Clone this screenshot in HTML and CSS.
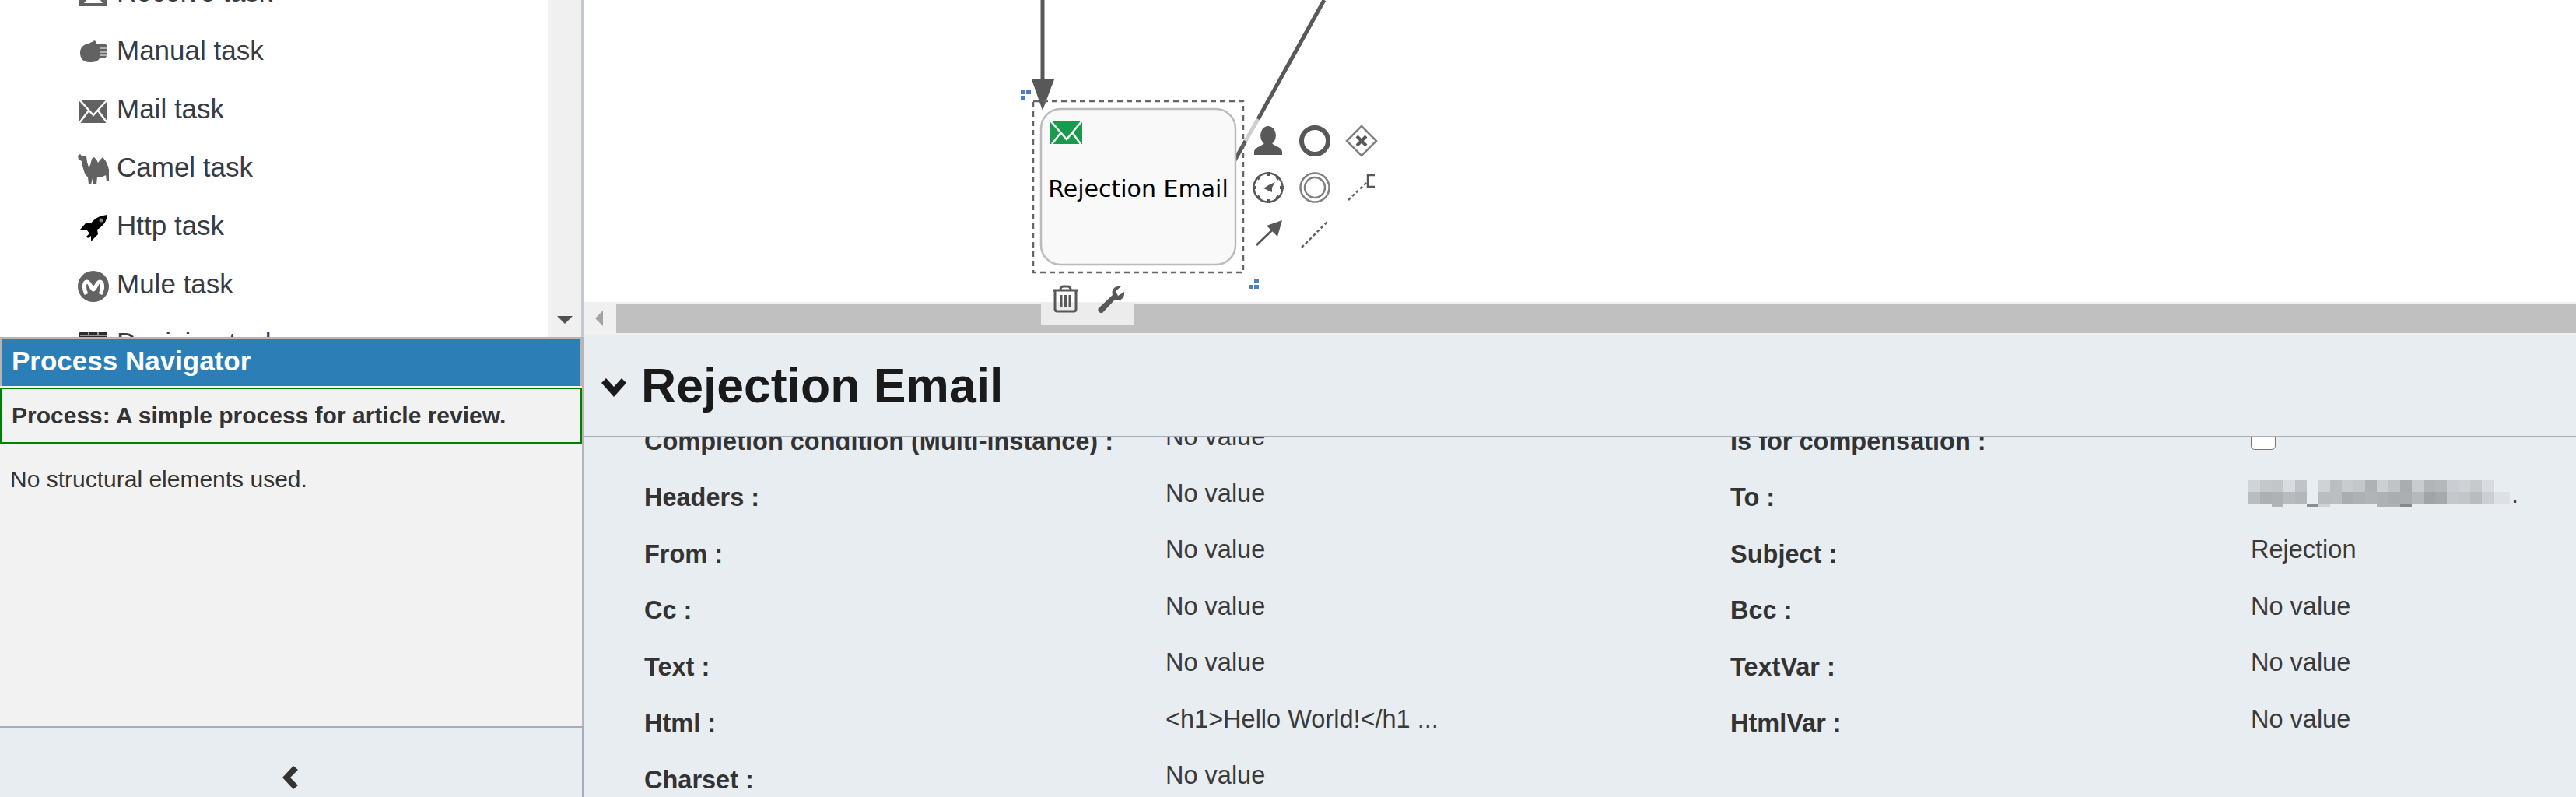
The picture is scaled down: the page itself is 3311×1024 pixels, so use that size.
FILE: index.html
```html
<!DOCTYPE html>
<html lang="en">

<head>
    <meta charset="UTF-8">
    <meta name="viewport" content="width=device-width, initial-scale=1.0">
    <title>Rejection Email</title>
    <link rel="stylesheet" href="styles.css">
</head>

<body>
    <div class="app">
        <aside class="sidebar">
            <div class="palette">
                <ul class="palette-list">
                    <li class="palette-item">
                        <svg class="palette-icon" viewBox="0 0 40 46">
                            <rect class="ic-grey" x="2" y="11" width="36" height="30" />
                            <polygon class="ic-white" points="8,37 14,29 26,29 32,37" />
                        </svg>
                        Receive task
                    </li>
                    <li class="palette-item">
                        <svg class="palette-icon" viewBox="0 0 40 46">
                            <path class="ic-grey" d="M3 26C3 18 8 15 14 14L22 10L25 15H36Q38 16 38 24Q38 32 34 33H28C26 37 22 38 15 38C7 38 3 33 3 26Z" />
                            <path class="ic-cut ic-cut-thin" d="M29 20H38M29 25H38M29 29H38" />
                        </svg>
                        Manual task
                    </li>
                    <li class="palette-item">
                        <svg class="palette-icon" viewBox="0 0 40 46">
                            <rect class="ic-grey" x="2" y="11" width="36" height="30" />
                            <path class="ic-cut" d="M2 11L20 31L38 11M2 41L14 25M38 41L26 25" />
                        </svg>
                        Mail task
                    </li>
                    <li class="palette-item">
                        <svg class="palette-icon" viewBox="0 0 40 46">
                            <path class="ic-grey" d="M0 8L3 6L6 9L11 9L12 16L14 23L16 20L18 12L21 10L24 13L26 17L29 13L32 10L36 15L39 22L40 26V41H37L36 33L32 35L25 35L24 45H20L19 37L17 45H14L13 36L9 31L6 21L5 15L1 13Z" />
                        </svg>
                        Camel task
                    </li>
                    <li class="palette-item">
                        <svg class="palette-icon" viewBox="0 0 40 46">
                            <path d="M38 9C29 10 22 13 17 20H10L3 28L12 29L15 33L11 37L13 39L17 36L17 43L26 34L25 28C32 24 37 18 38 9Z" />
                            <circle class="ic-window" cx="30" cy="16" r="2.5" />
                        </svg>
                        Http task
                    </li>
                    <li class="palette-item">
                        <svg class="palette-icon" viewBox="0 0 40 46">
                            <circle class="ic-grey" cx="20" cy="26" r="20" />
                            <path class="ic-cut ic-cut-wide" d="M11 36C7 28 8 20 12 20C15 20 18 30 20 30C22 30 25 20 28 20C32 20 33 28 29 36" />
                        </svg>
                        Mule task
                    </li>
                    <li class="palette-item">
                        <svg class="palette-icon" viewBox="0 0 40 46">
                            <rect class="ic-dark" x="2" y="9" width="36" height="30" rx="2" />
                            <path class="ic-cut ic-cut-thin" d="M3 14H37M14 10V14M26 10V14" />
                        </svg>
                        Decision task
                    </li>
                </ul>
                <div class="palette-scroll">
                    <span class="arrow-down"></span>
                </div>
            </div>

            <section class="navigator">
                <h2 class="navigator-title">Process Navigator</h2>
                <div class="navigator-process">Process: A simple process for article review.</div>
                <p class="navigator-note">No structural elements used.</p>
            </section>

            <div class="sidebar-foot">
                <svg class="collapse-icon" viewBox="0 0 22 30">
                    <path d="M15 0L21 5L11 15L21 25L15 30L1 15Z" />
                </svg>
            </div>
        </aside>

        <main class="main">
            <div class="canvas">
                <!-- coordinates in the viewBox are the page ones, x starts at 750 -->
                <svg class="diagram" viewBox="750 0 1100 430">
                    <path class="edge" d="M1340 0V106" />
                    <polygon class="edge-head" points="1326,102 1355,102 1340,142" />
                    <path class="edge" d="M1587 206L1601 181" />
                    <path class="edge edge-faded" d="M1601 181L1617 153" />
                    <path class="edge" d="M1617 153L1702 0" />

                    <rect class="task" x="1338" y="140" width="250" height="200" rx="25" />
                    <rect class="task-select" x="1328" y="130" width="270" height="220" />
                    <text class="task-label" x="1463" y="253">Rejection Email</text>

                    <rect class="mail-back" x="1350" y="155" width="41" height="30" />
                    <path class="mail-lines" d="M1350 155L1371 179L1391 155M1352 185L1364 170M1389 185L1378 170" />

                    <g class="handle">
                        <rect x="1312" y="116" width="6" height="5" />
                        <rect x="1319" y="116" width="6" height="5" />
                        <rect x="1312" y="123" width="5" height="5" />
                        <rect x="1612" y="358" width="6" height="6" />
                        <rect x="1605" y="366" width="5" height="5" />
                        <rect x="1612" y="366" width="6" height="5" />
                    </g>

                    <rect class="pad-back" x="1338" y="389" width="120" height="29" />

                    <!-- context pad -->
                    <g class="pad">
                        <ellipse class="pad-fill" cx="1630" cy="174" rx="10" ry="12" />
                        <path class="pad-fill" d="M1612 199V195C1612 189 1622 188 1625 184H1635C1638 188 1648 189 1648 195V199Z" />
                        <circle class="pad-thick" cx="1690" cy="181" r="17" />
                        <polygon class="pad-light" points="1750,162 1769,181 1750,200 1731,181" />
                        <path class="pad-x" d="M1744 175L1756 187M1756 175L1744 187" />

                        <circle class="pad-thin" cx="1630" cy="241" r="18.500" />
                        <path class="pad-x" d="M1630 221V226M1630 256V261M1610 241H1615M1645 241H1650M1616 227L1619 230M1644 227L1641 230M1616 255L1619 252M1644 255L1641 252" />
                        <path class="pad-fill" d="M1624 242L1632 237L1639 234L1635 241L1635 247Z" />
                        <circle class="pad-light" cx="1690" cy="241" r="18.500" />
                        <circle class="pad-light" cx="1690" cy="241" r="13" />
                        <path class="pad-dash" d="M1733 257L1758 233" />
                        <path class="pad-thin" d="M1767 225H1758V240H1767" />

                        <path class="pad-line" d="M1615 315L1638 293" />
                        <polygon class="pad-fill" points="1648,283 1642,304 1628,290" />
                        <path class="pad-dash" d="M1673 318L1707 284" />

                        <!-- buttons under the task -->
                        <path class="pad-thin pad-trash" d="M1353 373H1386M1363 372Q1363 368 1367 368H1372Q1376 368 1376 372M1356 374V397Q1356 400 1359 400H1380Q1383 400 1383 397V374M1364 379V395M1369.500 379V395M1375 379V395" />
                        <path class="pad-fill" d="M1412 396L1430 379C1428 372 1433 367 1441 368L1434 374L1437 380L1445 375C1446 383 1440 388 1433 385L1417 402C1413 403 1410 399 1412 396Z" />
                    </g>
                </svg>
            </div>

            <div class="hscroll">
                <div class="hscroll-btn"><span class="arrow-left"></span></div>
                <div class="hscroll-thumb"></div>
            </div>

            <header class="head">
                <svg class="head-icon" viewBox="0 0 32 24">
                    <path d="M6 0L16 11L26 0L32 6L16 24L0 6Z" />
                </svg>
                <h1 class="head-title">Rejection Email</h1>
            </header>

            <div class="props">
                <div class="props-grid">
                    <div class="prop-label">Completion condition (Multi-instance) :</div>
                    <div class="prop-value">No value</div>
                    <div class="prop-label">Is for compensation :</div>
                    <div class="prop-value"><input class="prop-check" type="checkbox"></div>

                    <div class="prop-label">Headers :</div>
                    <div class="prop-value">No value</div>
                    <div class="prop-label">To :</div>
                    <div class="prop-value prop-blur">
                        <svg class="mosaic" viewBox="0 0 338 34" shape-rendering="crispEdges">
                            <rect x="0" y="0" width="15" height="15" fill="#d0d4d7" />
                            <rect x="15" y="0" width="15" height="15" fill="#c4c8cb" />
                            <rect x="30" y="0" width="15" height="15" fill="#c2c6c8" />
                            <rect x="45" y="0" width="15" height="15" fill="#d8dbe0" />
                            <rect x="60" y="0" width="15" height="15" fill="#c0c4c8" />
                            <rect x="90" y="0" width="15" height="15" fill="#cfd2d6" />
                            <rect x="105" y="0" width="15" height="15" fill="#babec1" />
                            <rect x="120" y="0" width="15" height="15" fill="#c8cbcf" />
                            <rect x="135" y="0" width="15" height="15" fill="#c4c7ca" />
                            <rect x="150" y="0" width="15" height="15" fill="#afb2b5" />
                            <rect x="165" y="0" width="15" height="15" fill="#ccd0d5" />
                            <rect x="180" y="0" width="15" height="15" fill="#c0c4c7" />
                            <rect x="195" y="0" width="15" height="15" fill="#a9adb0" />
                            <rect x="210" y="0" width="15" height="15" fill="#c8ccce" />
                            <rect x="225" y="0" width="15" height="15" fill="#b1b5b8" />
                            <rect x="240" y="0" width="15" height="15" fill="#b4b8bb" />
                            <rect x="255" y="0" width="15" height="15" fill="#cacdd2" />
                            <rect x="270" y="0" width="15" height="15" fill="#ced1d5" />
                            <rect x="285" y="0" width="15" height="15" fill="#c6cacd" />
                            <rect x="300" y="0" width="15" height="15" fill="#d8dce0" />

                            <rect x="0" y="15" width="15" height="15" fill="#b9bdc0" />
                            <rect x="15" y="15" width="15" height="15" fill="#adb0b3" />
                            <rect x="30" y="15" width="15" height="15" fill="#aeb2b5" />
                            <rect x="45" y="15" width="15" height="15" fill="#b8bcbf" />
                            <rect x="60" y="15" width="15" height="15" fill="#b3b7ba" />
                            <rect x="90" y="15" width="15" height="15" fill="#b9bdc0" />
                            <rect x="105" y="15" width="15" height="15" fill="#babec1" />
                            <rect x="120" y="15" width="15" height="15" fill="#a9adb0" />
                            <rect x="135" y="15" width="15" height="15" fill="#adb1b4" />
                            <rect x="150" y="15" width="15" height="15" fill="#b0b4b7" />
                            <rect x="165" y="15" width="15" height="15" fill="#aeb2b5" />
                            <rect x="180" y="15" width="15" height="15" fill="#a9adb0" />
                            <rect x="195" y="15" width="15" height="15" fill="#abafb2" />
                            <rect x="210" y="15" width="15" height="15" fill="#b5b9bc" />
                            <rect x="225" y="15" width="15" height="15" fill="#a0a4a7" />
                            <rect x="240" y="15" width="15" height="15" fill="#a5a9ac" />
                            <rect x="255" y="15" width="15" height="15" fill="#c4c8ca" />
                            <rect x="270" y="15" width="15" height="15" fill="#c2c6c9" />
                            <rect x="285" y="15" width="15" height="15" fill="#b8bcbf" />
                            <rect x="300" y="15" width="15" height="15" fill="#cbcfd3" />
                            <rect x="315" y="15" width="21" height="15" fill="#dde1e5" />

                            <rect x="30" y="30" width="15" height="4" fill="#b0b4b7" />
                            <rect x="75" y="30" width="15" height="4" fill="#8a8e91" />
                            <rect x="90" y="30" width="15" height="4" fill="#ced2d6" />
                            <rect x="165" y="30" width="30" height="4" fill="#aeb2b5" />
                            <rect x="195" y="30" width="15" height="4" fill="#85898c" />
                        </svg>.
                    </div>

                    <div class="prop-label">From :</div>
                    <div class="prop-value">No value</div>
                    <div class="prop-label">Subject :</div>
                    <div class="prop-value">Rejection</div>

                    <div class="prop-label">Cc :</div>
                    <div class="prop-value">No value</div>
                    <div class="prop-label">Bcc :</div>
                    <div class="prop-value">No value</div>

                    <div class="prop-label">Text :</div>
                    <div class="prop-value">No value</div>
                    <div class="prop-label">TextVar :</div>
                    <div class="prop-value">No value</div>

                    <div class="prop-label">Html :</div>
                    <div class="prop-value">&lt;h1&gt;Hello World!&lt;/h1 ...</div>
                    <div class="prop-label">HtmlVar :</div>
                    <div class="prop-value">No value</div>

                    <div class="prop-label">Charset :</div>
                    <div class="prop-value">No value</div>
                </div>
            </div>
        </main>
    </div>
</body>

</html>
```

FILE: styles.css
```css
* {
    box-sizing: border-box;
}

html,
body {
    margin: 0;
    height: 100%;
    overflow: hidden;
}

body {
    font-family: "Liberation Sans", Arial, sans-serif;
    font-size: 32.5px;
    color: #333;
    background: #e8edf1;
}

.app {
    display: flex;
    height: 1024px;
}

/* left column */
.sidebar {
    display: flex;
    flex-direction: column;
    flex: 0 0 750px;
    height: 100%;
}

.palette {
    display: flex;
    flex: 0 0 433px;
    overflow: hidden;
    border-right: 3px solid #c5cad0;
}

.palette-list {
    flex: 1;
    list-style: none;
    margin: -48px 0 0;
    padding: 0 0 0 100px;
    background: #fff;
}

.palette-item {
    display: flex;
    align-items: center;
    gap: 10px;
    height: 75px;
    font-size: 35px;
    color: #373c44;
}

.palette-icon {
    flex: 0 0 40px;
    width: 40px;
    height: 46px;
    filter: blur(0.6px);
}

.ic-grey {
    fill: #626262;
}

.ic-dark {
    fill: #2c2c2c;
}

.ic-white {
    fill: #fff;
}

.ic-window {
    fill: #888;
}

.ic-cut {
    fill: none;
    stroke: #fff;
    stroke-width: 2.5;
}

.ic-cut-wide {
    stroke-width: 5;
}

.ic-cut-thin {
    stroke-width: 1;
}

.palette-scroll {
    display: flex;
    justify-content: center;
    align-items: flex-end;
    flex: 0 0 42px;
    padding-bottom: 17px;
    background: #f0f0f0;
}

.arrow-down {
    border-left: 10px solid transparent;
    border-right: 10px solid transparent;
    border-top: 10px solid #505050;
}

.navigator {
    flex: 1;
    background: #f2f2f2;
    border-top: 2px solid #b5b5b5;
    border-right: 2px solid #b5b5b5;
}

.navigator-title {
    margin: 0;
    height: 61px;
    padding-left: 13px;
    font-size: 35px;
    line-height: 58px;
    font-weight: bold;
    color: #fff;
    background: #2b7eb6;
    border-left: 2px solid #b5b5b5;
    border-right: 2px solid #b5b5b5;
}

.navigator-process {
    height: 72px;
    margin-top: 2px;
    padding-left: 13px;
    font-size: 30px;
    line-height: 67px;
    font-weight: bold;
    border: 2px solid #008000;
}

.navigator-note {
    margin: 27px 0 0 13px;
    font-size: 30px;
    line-height: 37px;
}

.sidebar-foot {
    display: flex;
    justify-content: center;
    align-items: flex-end;
    flex: 0 0 91px;
    padding: 0 2px 10px 0;
    background: #e8edf1;
    border-top: 2px solid #a4aebd;
    border-right: 2px solid #a4aebd;
}

.collapse-icon {
    width: 22px;
    height: 30px;
    fill: #333;
}

/* right column */
.main {
    display: flex;
    flex-direction: column;
    flex: 1;
    min-width: 0;
    height: 100%;
}

.canvas {
    position: relative;
    flex: 0 0 388px;
    background: #fff;
}

.diagram {
    position: absolute;
    top: 0;
    left: 0;
    z-index: 1;
    width: 1100px;
    height: 430px;
}

.edge {
    fill: none;
    stroke: #585858;
    stroke-width: 5;
}

.edge-faded {
    stroke: #cfcfcf;
}

.edge-head {
    fill: #585858;
}

.task {
    fill: #f9f9f9;
    stroke: #bbb;
    stroke-width: 2.5;
}

.task-select {
    fill: none;
    stroke: #666;
    stroke-width: 2.5;
    stroke-dasharray: 7 5;
}

.task-label {
    font-family: "DejaVu Sans", sans-serif;
    font-size: 30px;
    text-anchor: middle;
    fill: #000;
}

.mail-back {
    fill: #1a9a4e;
}

.mail-lines {
    fill: none;
    stroke: #f9f9f9;
    stroke-width: 2.5;
}

.handle {
    fill: #4a7fc1;
}

.pad {
    filter: blur(0.6px);
}

.pad-fill {
    fill: #585858;
}

.pad-thick {
    fill: none;
    stroke: #585858;
    stroke-width: 6;
}

.pad-thin {
    fill: none;
    stroke: #585858;
    stroke-width: 2.5;
}

.pad-trash {
    stroke-width: 3;
}

.pad-light {
    fill: none;
    stroke: #808080;
    stroke-width: 2.5;
}

.pad-x {
    fill: none;
    stroke: #585858;
    stroke-width: 4;
}

.pad-line {
    fill: none;
    stroke: #585858;
    stroke-width: 3;
}

.pad-dash {
    fill: none;
    stroke: #666;
    stroke-width: 2.5;
    stroke-dasharray: 4 3;
}

.pad-back {
    fill: #ececec;
}

.hscroll {
    display: flex;
    flex: 0 0 42px;
    background: #f0f0f0;
}

.hscroll-btn {
    display: flex;
    justify-content: center;
    align-items: center;
    flex: 0 0 42px;
    padding-right: 3px;
}

.arrow-left {
    border-top: 10px solid transparent;
    border-bottom: 10px solid transparent;
    border-right: 10px solid #a3a3a3;
}

.hscroll-thumb {
    flex: 1;
    margin: 2px 0;
    background: #c0c0c0;
}

.head {
    display: flex;
    align-items: center;
    gap: 19px;
    flex: 0 0 132px;
    padding: 0 0 0 23px;
    background: #e8edf1;
    border-bottom: 2px solid #a4aebd;
}

.head-icon {
    width: 32px;
    height: 24px;
    margin-top: 6px;
    fill: #1a1a1a;
}

.head-title {
    margin: 0;
    font-size: 62.5px;
    font-weight: bold;
    color: #1a1a1a;
}

.props {
    flex: 1;
    overflow: hidden;
}

.props-grid {
    display: grid;
    grid-template-columns: 670px 726px 669px 1fr;
    grid-auto-rows: 72.5px;
    align-items: center;
    margin-top: -31px;
    padding-left: 78px;
}

.prop-label {
    font-weight: bold;
}

.prop-value {
    margin-bottom: 11px;
    color: #3a3a3a;
}

.prop-check {
    appearance: none;
    display: block;
    width: 32px;
    height: 32px;
    margin: 0;
    background: #fff;
    border: 1.500px solid #767676;
    border-radius: 5px;
}

.prop-blur {
    display: flex;
    align-items: flex-end;
    margin-left: -3px;
    line-height: 1;
}

.mosaic {
    display: block;
    width: 338px;
    height: 34px;
}
```
